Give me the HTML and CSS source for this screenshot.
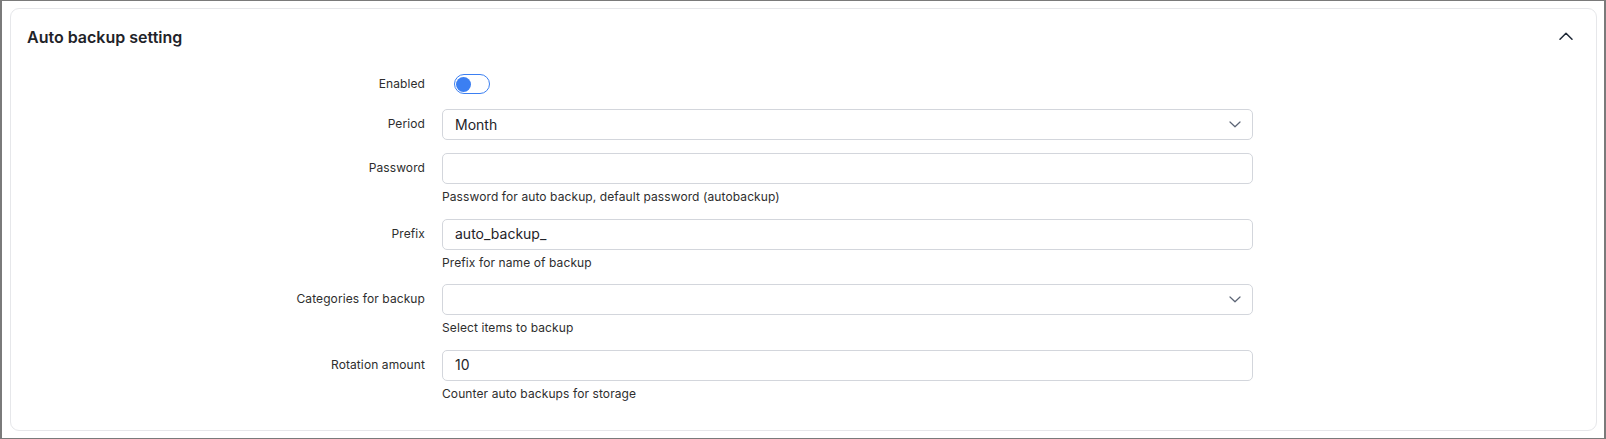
FILE: index.html
```html
<!DOCTYPE html>
<html lang="en">
<head>
<meta charset="utf-8">
<title>Auto backup setting</title>
<link rel="stylesheet" href="styles.css">
</head>
<body>
<div class="frame">
  <section class="card">
    <header class="card-header">
      <h2 class="card-title">Auto backup setting</h2>
      <svg class="collapse-icon" width="14" height="8" viewBox="0 0 14 8" aria-hidden="true">
        <polyline points="1,7.2 7,1.2 13,7.2" fill="none" stroke="#1f2937" stroke-width="1.5" stroke-linecap="round" stroke-linejoin="round"/>
      </svg>
    </header>
    <div class="card-body">
      <div class="row row-toggle">
        <label class="label label-toggle">Enabled</label>
        <div class="control">
          <span class="toggle"><span class="knob"></span></span>
        </div>
      </div>
      <div class="row">
        <label class="label">Period</label>
        <div class="control">
          <div class="field select">
            <span class="value">Month</span>
            <svg class="select-arrow" width="12" height="7" viewBox="0 0 12 7" aria-hidden="true">
              <polyline points="1,1 6,5.8 11,1" fill="none" stroke="#5b6475" stroke-width="1.2" stroke-linecap="round" stroke-linejoin="round"/>
            </svg>
          </div>
        </div>
      </div>
      <div class="row">
        <label class="label">Password</label>
        <div class="control">
          <div class="field"><span class="value"></span></div>
          <div class="help">Password for auto backup, default password (autobackup)</div>
        </div>
      </div>
      <div class="row">
        <label class="label">Prefix</label>
        <div class="control">
          <div class="field"><span class="value">auto_backup_</span></div>
          <div class="help">Prefix for name of backup</div>
        </div>
      </div>
      <div class="row">
        <label class="label">Categories for backup</label>
        <div class="control">
          <div class="field select">
            <span class="value"></span>
            <svg class="select-arrow" width="12" height="7" viewBox="0 0 12 7" aria-hidden="true">
              <polyline points="1,1 6,5.8 11,1" fill="none" stroke="#5b6475" stroke-width="1.2" stroke-linecap="round" stroke-linejoin="round"/>
            </svg>
          </div>
          <div class="help">Select items to backup</div>
        </div>
      </div>
      <div class="row row-last">
        <label class="label">Rotation amount</label>
        <div class="control">
          <div class="field"><span class="value">10</span></div>
          <div class="help">Counter auto backups for storage</div>
        </div>
      </div>
    </div>
  </section>
</div>
</body>
</html>
```

FILE: styles.css
```css
* {
  box-sizing: border-box;
}

html, body {
  margin: 0;
  padding: 0;
  background: #ffffff;
}

body {
  font-family: Inter, "Noto Sans", "Liberation Sans", sans-serif;
  color: #2b2b2b;
}

.frame {
  width: 1606px;
  height: 439px;
  border-style: solid;
  border-color: #7a7a7a;
  border-width: 1px 2px 1px 2px;
  background: #ffffff;
  overflow: hidden;
}

.card {
  margin: 7px 7px 0 8px;
  height: 423px;
  border: 1px solid #e6e7ea;
  border-radius: 9px;
  background: #ffffff;
}

.card-header {
  display: flex;
  align-items: center;
  justify-content: space-between;
  padding: 16px 23px 16px 16px;
}

.card-title {
  margin: 0;
  font-size: 16px;
  line-height: 24px;
  font-weight: 600;
  color: #1f2329;
  letter-spacing: 0;
}

.collapse-icon {
  display: block;
  margin-top: -2px;
}

.card-body {
  padding: 9px 0 0 0;
}

.row {
  display: flex;
  align-items: flex-start;
  margin-bottom: 13px;
}

.row-toggle {
  margin-bottom: 15px;
}

.row-last {
  margin-bottom: 0;
}

.label {
  width: 414px;
  flex: none;
  text-align: right;
  font-size: 12px;
  line-height: 17px;
  letter-spacing: 0.1px;
  padding-top: 6px;
  color: #2e2e2e;
}

.label-toggle {
  padding-top: 1px;
}

.control {
  margin-left: 17px;
  width: 811px;
  flex: none;
}

.toggle {
  display: flex;
  align-items: center;
  width: 36px;
  height: 20px;
  margin-left: 12px;
  border: 1px solid #3b7ff2;
  border-radius: 10px;
  padding-left: 1px;
  background: #ffffff;
}

.knob {
  display: block;
  width: 15px;
  height: 15px;
  border-radius: 50%;
  background: #3b7ff2;
}

.field {
  display: flex;
  align-items: center;
  justify-content: space-between;
  height: 31px;
  border: 1px solid #d3d6dc;
  border-radius: 5px;
  padding: 0 11px 0 12px;
  background: #ffffff;
}

.value {
  font-size: 14px;
  line-height: 20px;
  color: #1f2329;
}

.select-arrow {
  display: block;
}

.help {
  margin-top: 4px;
  font-size: 12px;
  line-height: 17.5px;
  letter-spacing: 0.1px;
  color: #2e2e2e;
}
```
